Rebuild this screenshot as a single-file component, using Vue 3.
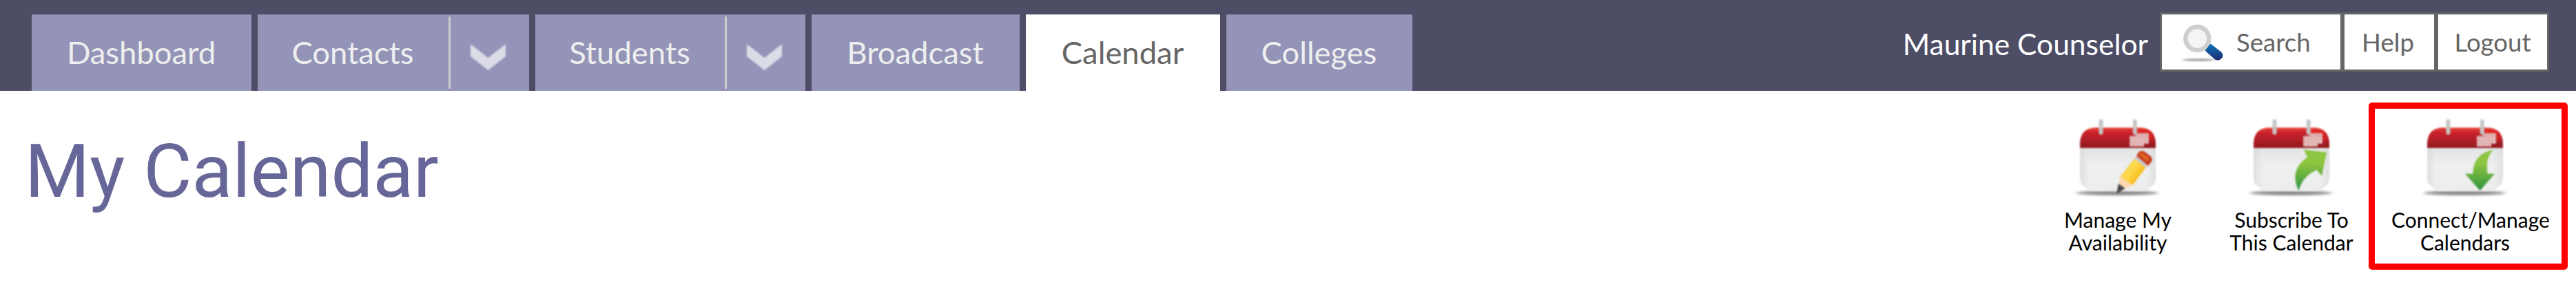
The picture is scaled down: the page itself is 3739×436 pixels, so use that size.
<!-- 日历页面 -->
<template>
  <div class="page">
    <header class="topbar">
      <nav class="tabs">
        <div
          v-for="tab in tabs"
          :key="tab.label"
          class="tab"
          :class="{ active: tab.active }"
          :style="{ width: tab.width + 'px' }"
        >
          <span class="tab-label">{{ tab.label }}</span>
          <span v-if="tab.menu" class="tab-menu">
            <svg class="chevron" width="54" height="42" viewBox="0 0 54 42">
              <path d="M1 2 L26.500 22 L52 2 V20 L26.500 40 L1 20 Z" fill="#dcdce8" />
            </svg>
          </span>
        </div>
      </nav>
      <div class="user">
        <span class="user-name">Maurine Counselor</span>
        <div class="links">
          <a class="link search">
            <svg width="70" height="62" viewBox="0 0 70 62">
              <defs>
                <linearGradient id="handle" x1="0" y1="0" x2="0" y2="1">
                  <stop offset="0" stop-color="#0b74bd" />
                  <stop offset="1" stop-color="#1c2c6c" />
                </linearGradient>
                <filter id="soft" x="-20%" y="-200%" width="140%" height="500%">
                  <feGaussianBlur stdDeviation="2 1.2" />
                </filter>
              </defs>
              <ellipse cx="31" cy="57" rx="23" ry="2" fill="#aaa" filter="url(#soft)" />
              <circle cx="29.3" cy="26" r="17" fill="#f4f4f4" stroke="#cfcfcf" stroke-width="6.5" />
              <path
                d="M48.5 33.5 L64 45.5 Q68.5 50 65 54.5 Q60.5 59.5 55 56.5 L40.5 43.5 Z"
                fill="url(#handle)"
              />
            </svg>
            <span>Search</span>
          </a>
          <a class="link help">Help</a>
          <a class="link logout">Logout</a>
        </div>
      </div>
    </header>

    <main class="content">
      <h1 class="title">My Calendar</h1>
      <div class="actions">
        <a
          v-for="item in actions"
          :key="item.icon"
          class="action"
          :class="{ marked: item.marked }"
        >
          <svg class="action-icon" width="130" height="120" viewBox="0 0 130 120">
            <defs>
              <linearGradient id="red" x1="0" y1="0" x2="0" y2="1">
                <stop offset="0" stop-color="#e8453c" />
                <stop offset="0.25" stop-color="#c9202a" />
                <stop offset="0.6" stop-color="#b01f27" />
                <stop offset="1" stop-color="#8f171c" />
              </linearGradient>
              <linearGradient id="paper" x1="0" y1="0" x2="0" y2="1">
                <stop offset="0" stop-color="#e2e3e5" />
                <stop offset="0.4" stop-color="#eeefef" />
                <stop offset="1" stop-color="#ededee" />
              </linearGradient>
              <linearGradient id="edge" x1="0" y1="0" x2="1" y2="0">
                <stop offset="0" stop-color="#d4d4d6" />
                <stop offset="0.12" stop-color="#d4d4d6" stop-opacity="0" />
                <stop offset="0.88" stop-color="#d4d4d6" stop-opacity="0" />
                <stop offset="1" stop-color="#d4d4d6" />
              </linearGradient>
              <linearGradient id="green" x1="0" y1="0" x2="0" y2="1">
                <stop offset="0.35" stop-color="#8cc540" />
                <stop offset="1" stop-color="#2f9242" />
              </linearGradient>
              <linearGradient id="yellow" x1="0" y1="0" x2="1" y2="0.7">
                <stop offset="0.2" stop-color="#f5bd22" />
                <stop offset="0.45" stop-color="#ffdc55" />
                <stop offset="0.8" stop-color="#f9bf20" />
              </linearGradient>
              <filter id="shade" x="-20%" y="-200%" width="140%" height="500%">
                <feGaussianBlur stdDeviation="3 1.6" />
              </filter>
            </defs>
            <ellipse cx="65" cy="110.5" rx="59" ry="3.2" fill="#858585" filter="url(#shade)" />
            <path
              d="M11 44 H121 V89 Q121 98 113 102 Q108 108 100 108 H32 Q24 108 19 102 Q11 98 11 89 Z"
              fill="url(#paper)"
            />
            <path
              d="M11 44 H121 V89 Q121 98 113 102 Q108 108 100 108 H32 Q24 108 19 102 Q11 98 11 89 Z"
              fill="url(#edge)"
              opacity="0.6"
            />
            <path d="M11 45 V38 Q12 15.500 34 15.500 H98 Q120 15.500 121 38 V45 Z" fill="url(#red)" />
            <path d="M92 18 H108 Q116 21 117 34 H108 V24 H92 Z" fill="#e8241c" opacity="0.6" />
            <path d="M83 27.500 H92 V23.500 H111 V39 H104 V43 H83 Z" fill="#dda5a5" />
            <path
              d="M83 31.500 H111 M83 35.500 H111 M83 39.500 H104 M88 27.500 V43 M93 23.500 V43 M98 23.500 V43 M103 23.500 V43 M108 23.500 V39"
              stroke="#e9cccc"
              stroke-width="1"
            />
            <rect x="38.500" y="3.500" width="6" height="22" rx="2" fill="#c6c6c6" />
            <rect x="87.800" y="3.500" width="6" height="22" rx="2" fill="#c6c6c6" />

            <g v-if="item.icon === 'pencil'">
              <path d="M69.500 87 L90 60.500 L106.500 73.500 L87.500 99 Z" fill="url(#yellow)" />
              <path d="M69.500 87 L87.500 99 L76 104.500 L67 98 Z" fill="#fbd6ae" />
              <path d="M67 97 L76.500 104 L64 111.500 Z" fill="#45474b" />
              <path d="M90 60.500 L93.500 56.500 L110 70 L106.500 73.500 Z" fill="#c9c9cc" />
              <path
                d="M93 56.500 L96 51.500 Q99.500 47.500 105 50.500 L113.500 57 Q117.500 61 114.500 65.500 L110 71 Z"
                fill="#c93c20"
              />
              <path d="M97 55 L100 51.500 L112 60.500 L108.500 65 Z" fill="#dc6620" />
            </g>
            <path
              v-else-if="item.icon === 'share'"
              d="M84 47.500 L117 51.500 L110 85.500 L102.500 77 Q82 86 76.500 107 Q62 77 89 58.500 Z"
              fill="url(#green)"
            />
            <path
              v-else
              d="M107 47.500 Q95 59 98.700 82.500 H109 L87.700 107 L66 82.500 H77.500 Q77 54 107 47.500 Z"
              fill="url(#green)"
            />
          </svg>
          <span class="action-label">{{ item.label }}</span>
        </a>
      </div>
    </main>
  </div>
</template>

<script setup>
const tabs = [
  { label: 'Dashboard', width: 319 },
  { label: 'Contacts', width: 394, menu: true },
  { label: 'Students', width: 392, menu: true },
  { label: 'Broadcast', width: 302 },
  { label: 'Calendar', width: 282, active: true },
  { label: 'Colleges', width: 270 }
]

const actions = [
  { label: 'Manage My Availability', icon: 'pencil' },
  { label: 'Subscribe To This Calendar', icon: 'share' },
  { label: 'Connect/Manage Calendars', icon: 'download', marked: true }
]
</script>

<style>
body {
  background: #fff;
}
</style>

<style scoped>
.page {
  width: 3739px;
  height: 436px;
  overflow: hidden;
  font-family: Lato, "Liberation Sans", sans-serif;
  background: #fff;
}

/* 顶部导航 */
.topbar {
  display: flex;
  justify-content: space-between;
  height: 132px;
  box-sizing: border-box;
  padding: 18px 39px 0 46px;
  background: #4d4d66;
}

.tabs {
  display: flex;
  gap: 9px;
  padding-top: 3px;
}

.tab {
  display: flex;
  height: 111px;
  background: #9494b8;
  color: #eee;
  font-size: 45.4px;
  line-height: 109px;
}

.tab-label {
  flex: 1;
  padding-right: 1px;
  text-align: center;
}

.tab.active {
  background: #fff;
  color: #666;
}

.tab-menu {
  width: 117px;
  height: 105px;
  box-sizing: border-box;
  margin: 3px 0;
  padding: 38px 0 0 28px;
  border-left: 3px solid #ccc;
  line-height: 0;
}

.chevron {
  filter: blur(1px);
}

.user {
  display: flex;
}

.user-name {
  margin-right: 17px;
  color: #fff;
  font-size: 42.5px;
  line-height: 91px;
}

.links {
  display: flex;
  gap: 6px;
  height: 86px;
  box-sizing: border-box;
  padding: 3px;
  background: #666;
}

.link {
  display: flex;
  justify-content: center;
  background: #fff;
  color: #666;
  font-size: 36.6px;
  line-height: 80px;
}

.search {
  width: 259px;
  box-sizing: border-box;
  justify-content: flex-start;
  padding-left: 22px;
}

.search svg {
  margin: 9px 16px 0 0;
  filter: blur(0.7px);
}

.help {
  width: 130px;
  box-sizing: border-box;
  padding-right: 4px;
}

.logout {
  width: 158px;
}

/* 标题和操作 */
.content {
  display: flex;
  justify-content: space-between;
  align-items: flex-start;
  padding: 17px 12px 0 36px;
}

.title {
  margin: 37px 0 0;
  color: #669;
  font-family: Roboto, "Liberation Sans", sans-serif;
  font-size: 108px;
  font-weight: 400;
  line-height: 127px;
}

.actions {
  display: flex;
}

.action {
  width: 252px;
  height: 243px;
  box-sizing: border-box;
  padding: 21px 19px 0;
  color: #000;
}

.action.marked {
  width: 289px;
  margin-left: -14px;
  padding: 12px 33px 0 24px;
  border: 9px solid #f00;
  border-radius: 5px;
}

.action-icon {
  display: block;
  margin: 0 0 0 41px;
  filter: blur(0.8px);
}

.action-label {
  display: block;
  margin-top: 13px;
  font-size: 30px;
  line-height: 33px;
  text-align: center;
}
</style>
